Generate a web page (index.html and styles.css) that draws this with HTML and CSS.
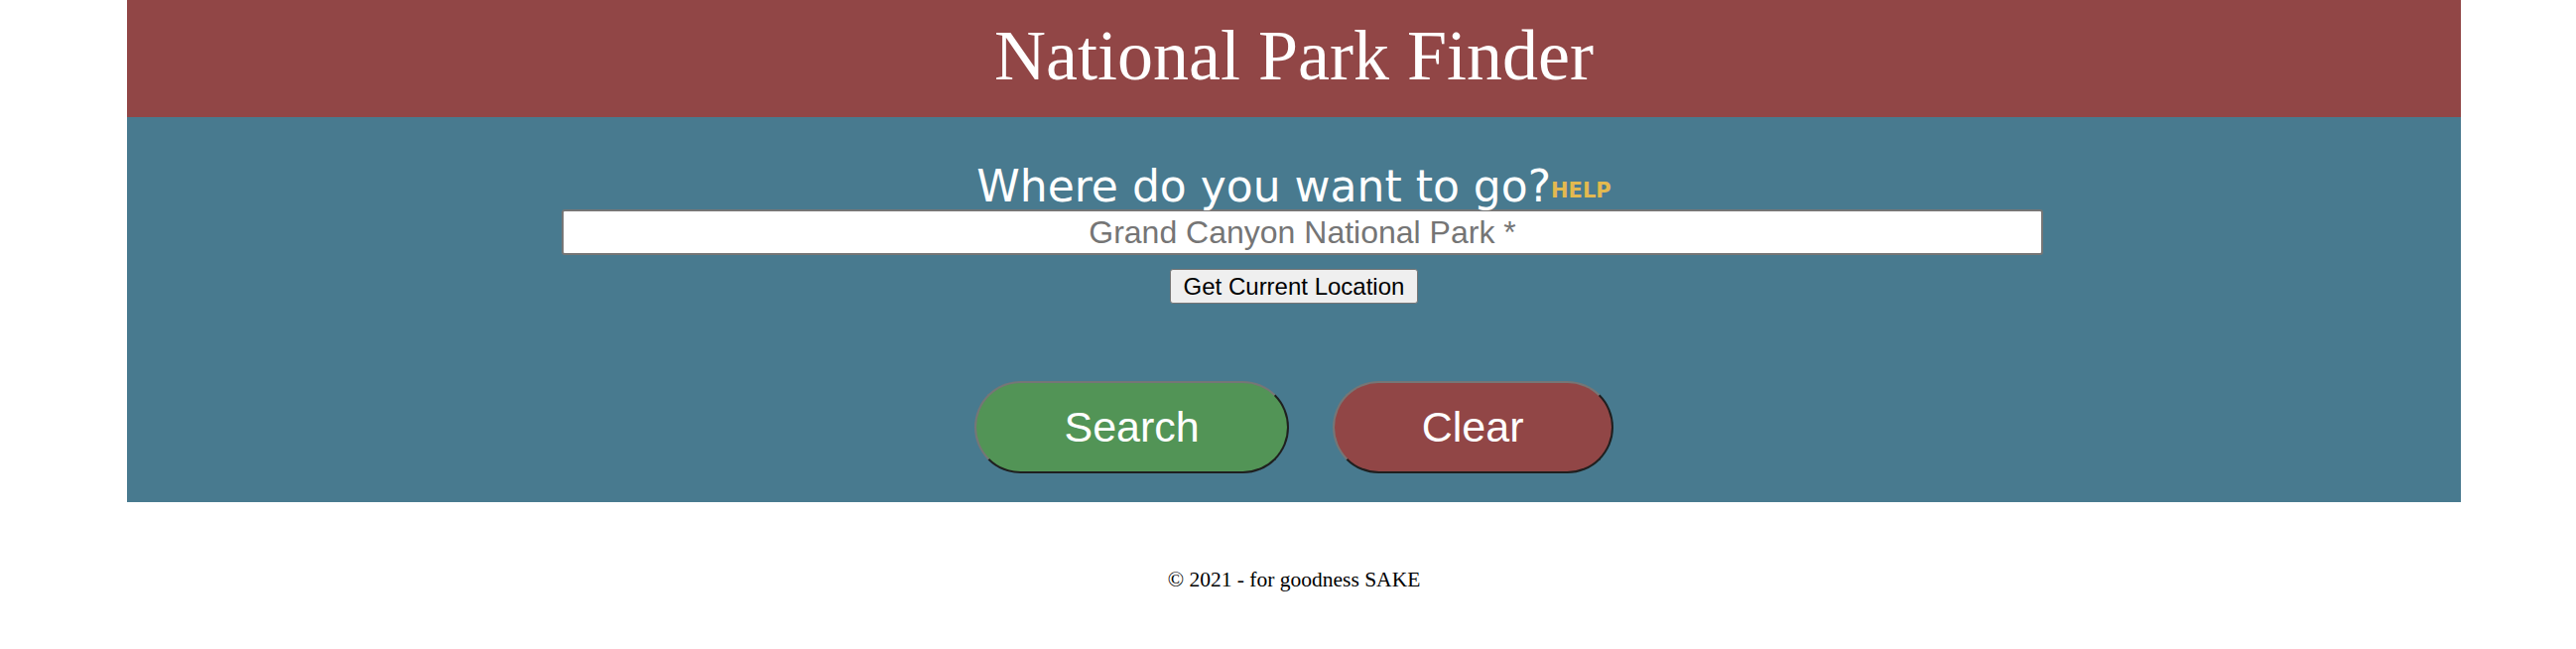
FILE: index.html
```html
<!DOCTYPE html>
<html lang="en">
<head>
<meta charset="utf-8">
<title>National Park Finder</title>
<link rel="stylesheet" href="styles.css">
</head>
<body>
<div class="page">
  <header class="top">
    <h1 class="title">National Park Finder</h1>
  </header>
  <section class="finder">
    <h2 class="ask">Where do you want to go?<span class="help">HELP</span></h2>
    <input class="place" type="text" placeholder="Grand Canyon National Park *">
    <div class="loc-row"><button class="loc" type="button">Get Current Location</button></div>
    <div class="actions">
      <button class="big search" type="button">Search</button>
      <button class="big clear" type="button">Clear</button>
    </div>
  </section>
  <footer class="foot">© 2021 - for goodness SAKE</footer>
</div>
</body>
</html>
```
FILE: styles.css
```css
html, body {
  margin: 0;
  padding: 0;
  background: #ffffff;
}
.page {
  margin-left: 128px;
  width: 2352px;
}
.top {
  background: #914646;
  height: 118px;
  box-sizing: border-box;
  padding-top: 20px;
}
.title {
  margin: 0;
  font-family: "Liberation Serif", "Times New Roman", serif;
  font-weight: normal;
  font-size: 72px;
  line-height: 72px;
  color: #ffffff;
  text-align: center;
}
.finder {
  background: #487a8f;
  height: 388px;
  box-sizing: border-box;
  padding-top: 48px;
}
.ask {
  margin: 0;
  font-family: "DejaVu Sans", Verdana, sans-serif;
  font-weight: normal;
  font-size: 44px;
  line-height: 43px;
  color: #ffffff;
  text-align: center;
}
.help {
  font-size: 21px;
  line-height: 20px;
  font-weight: bold;
  color: #e3b94f;
  vertical-align: 4px;
}
.place {
  display: block;
  margin: 2px 0 0 438px;
  width: 1493px;
  height: 46px;
  box-sizing: border-box;
  border: 2px solid #767676;
  border-radius: 3px;
  background: #ffffff;
  font-family: "Liberation Sans", Arial, sans-serif;
  font-size: 32px;
  text-align: center;
  padding: 0;
  color: #000;
}
.place::placeholder {
  color: #757575;
}
.loc-row {
  display: flex;
  justify-content: center;
  margin-top: 14px;
}
.loc {
  height: 35px;
  box-sizing: border-box;
  padding: 0 12.5px;
  border: 1px solid #767676;
  border-radius: 3px;
  background: #efefef;
  font-family: "Liberation Sans", Arial, sans-serif;
  font-size: 24px;
  color: #000;
}
.actions {
  display: flex;
  justify-content: center;
  gap: 44px;
  margin-top: 78px;
}
.big {
  height: 93px;
  box-sizing: border-box;
  padding: 0 88px;
  border-width: 2px;
  border-style: solid;
  border-color: #767676 #1f1f1f #1f1f1f #767676;
  border-radius: 50px;
  font-family: "Liberation Sans", Arial, sans-serif;
  font-size: 43px;
  color: #ffffff;
}
.search {
  background: #529456;
}
.clear {
  background: #914646;
}
.foot {
  padding-top: 66px;
  font-family: "Liberation Serif", "Times New Roman", serif;
  font-size: 21.5px;
  text-align: center;
  color: #000;
}
```
